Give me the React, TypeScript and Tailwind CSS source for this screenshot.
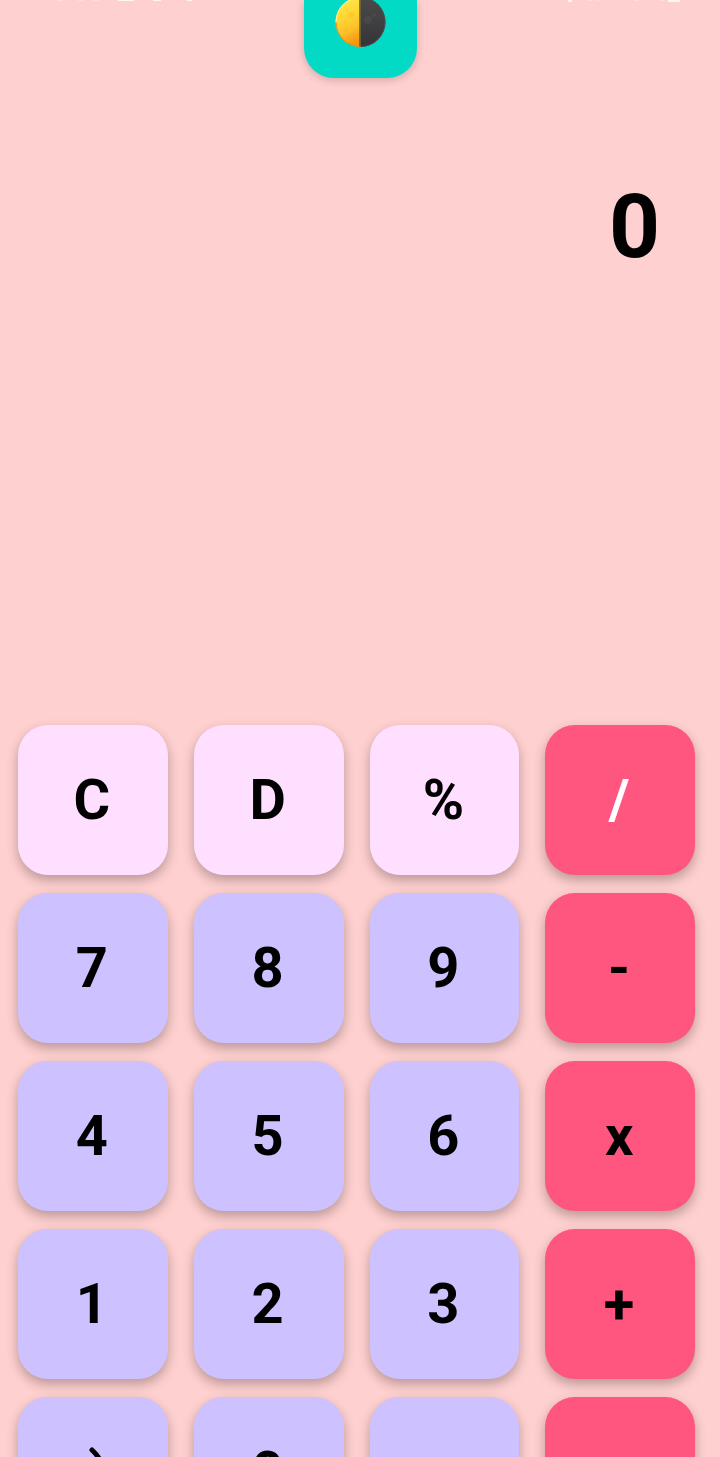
import { useState } from 'react';

type Tone = 'light' | 'digit' | 'operator';
type Key = { id: string; tone: Tone };

const keys: Key[] = [
  { id: 'C', tone: 'light' },
  { id: 'D', tone: 'light' },
  { id: '%', tone: 'light' },
  { id: '/', tone: 'operator' },
  { id: '7', tone: 'digit' },
  { id: '8', tone: 'digit' },
  { id: '9', tone: 'digit' },
  { id: '-', tone: 'operator' },
  { id: '4', tone: 'digit' },
  { id: '5', tone: 'digit' },
  { id: '6', tone: 'digit' },
  { id: 'x', tone: 'operator' },
  { id: '1', tone: 'digit' },
  { id: '2', tone: 'digit' },
  { id: '3', tone: 'digit' },
  { id: '+', tone: 'operator' },
  { id: 'mode', tone: 'digit' },
  { id: '0', tone: 'digit' },
  { id: '.', tone: 'digit' },
  { id: '=', tone: 'operator' },
];

const tones: Record<Tone, string> = {
  light: 'bg-[#ffdfff] text-black',
  digit: 'bg-[#cdc1ff] text-black',
  operator: 'bg-[#ff5680] text-black',
};

function StatusMarks() {
  return (
    <svg className="absolute inset-x-0 top-0 h-1 w-full" viewBox="0 0 720 4" preserveAspectRatio="none" aria-hidden="true">
      <g fill="#fff6ef">
        <rect x="118" width="16" height="1" />
        <rect x="153" width="8" height="1" />
        <rect x="187" width="5" height="1" />
        <rect x="568" width="4" height="2" />
        <rect x="668" width="12" height="2" />
      </g>
      <g fill="#fde0dc">
        <rect x="57" width="6" height="1" />
        <rect x="78" width="5" height="1" />
        <rect x="93" width="6" height="1" />
        <rect x="587" width="5" height="1" />
        <rect x="596" width="3" height="1" />
        <rect x="635" width="4" height="1" />
        <rect x="659" width="6" height="1" />
      </g>
    </svg>
  );
}

function HalfMoon() {
  return (
    <svg width="52" height="52" viewBox="0 0 52 52" aria-hidden="true">
      <defs>
        <linearGradient id="lit" x1="0.2" y1="0" x2="0.45" y2="1">
          <stop offset="0" stopColor="#ffe95c" />
          <stop offset="0.35" stopColor="#ffda35" />
          <stop offset="0.7" stopColor="#fdc22a" />
          <stop offset="1" stopColor="#f6960f" />
        </linearGradient>
        <linearGradient id="dark" x1="0" y1="0" x2="0" y2="1">
          <stop offset="0" stopColor="#4a4a4a" />
          <stop offset="0.5" stopColor="#404042" />
          <stop offset="1" stopColor="#343437" />
        </linearGradient>
      </defs>
      <path d="M26.5 1a25 25 0 0 0 0 50z" fill="url(#lit)" />
      <path d="M26.5 1a25 25 0 0 1 0 50z" fill="url(#dark)" />
      <path d="M26.5 1.5A24.5 24.5 0 0 0 2 26" fill="none" stroke="#fff0a0" strokeWidth="1" />
      <path d="M2 26A24.5 24.5 0 0 0 26.5 50.5" fill="none" stroke="#d9942a" strokeWidth="1" />
      <path d="M26.5 50.5A24.5 24.5 0 0 0 26.5 1.5" fill="none" stroke="#4c5150" strokeWidth="1" />
      <path d="M26 1.5v49" stroke="#6e5424" strokeWidth="1.5" />
      <g fill="#f0a51c" opacity="0.22">
        <circle cx="17" cy="19" r="3" />
        <circle cx="12" cy="34" r="2" />
        <circle cx="20" cy="40" r="3" />
      </g>
      <g fill="#666" opacity="0.22">
        <circle cx="34" cy="24" r="4" />
        <circle cx="40" cy="19" r="2" />
      </g>
    </svg>
  );
}

function Crescent() {
  return (
    <svg width="42" height="52" viewBox="0 0 42 52" aria-hidden="true">
      <path d="M21 4C36 18 36 34 21 48" fill="none" stroke="#000" strokeWidth="5" strokeLinecap="round" />
    </svg>
  );
}

export default function App() {
  const [value, setValue] = useState('0');

  const press = (id: string) => {
    if (id === 'C') setValue('0');
    else if (id === 'D') setValue((v) => (v.length > 1 ? v.slice(0, -1) : '0'));
    else if (/^[0-9.]$/.test(id)) setValue((v) => (v === '0' && id !== '.' ? id : v + id));
  };

  return (
    <div className="relative flex h-screen flex-col overflow-hidden bg-[#ffd0d0] font-['Roboto',sans-serif] font-bold">
      <StatusMarks />
      <header className="flex shrink-0 justify-center">
        <button
          type="button"
          aria-label="Toggle theme"
          className="flex h-[78px] w-[113px] items-start justify-center rounded-b-[30px] bg-[#03dac6] shadow-[0_2px_8px_rgba(0,0,0,0.2)]"
        >
          <span className="-mt-1">
            <HalfMoon />
          </span>
        </button>
      </header>
      <main className="flex flex-col">
        <output className="block h-[647px] truncate pt-[96px] pr-[60px] pl-6 text-right text-[89px] leading-[106px] text-black">
          {value}
        </output>
        <div className="grid grid-cols-4 gap-x-[26px] gap-y-[18px] pr-[25px] pl-[18px]">
          {keys.map(({ id, tone }) => (
            <button
              key={id}
              type="button"
              aria-label={id}
              onClick={() => press(id)}
              className={`flex h-[150px] items-center justify-center rounded-[30px] pr-[2px] text-[56px] leading-[66px] shadow-[0_5px_12px_rgba(0,0,0,0.28)] ${tones[tone]}`}
            >
              {id === 'mode' ? <Crescent /> : <span className={id === '/' ? 'text-white' : ''}>{id}</span>}
            </button>
          ))}
        </div>
      </main>
    </div>
  );
}
